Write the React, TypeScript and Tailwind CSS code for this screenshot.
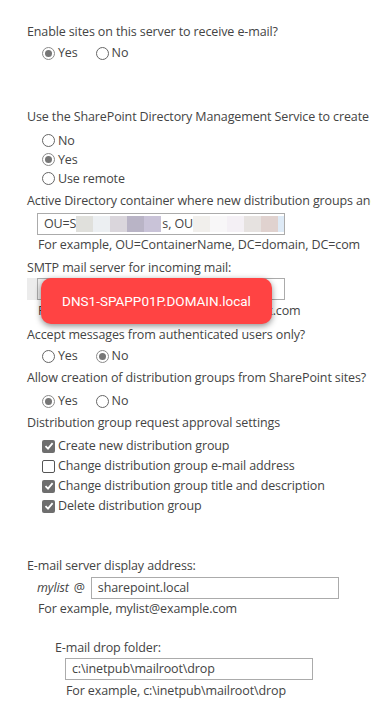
import React from 'react';

const font = { fontFamily: '"Open Sans", "Noto Sans", sans-serif' };

const Radio: React.FC<{ checked?: boolean; label: string }> = ({ checked, label }) => (
  <span className="flex items-center">
    <span className={`w-[13px] h-[13px] rounded-full border flex items-center justify-center bg-white ${checked ? 'border-[#8a8a8a]' : 'border-[#666]'}`}>
      {checked && <span className="w-[7px] h-[7px] rounded-full bg-[#767676]" />}
    </span>
    <span className="ml-[3px]">{label}</span>
  </span>
);

const Check: React.FC<{ checked?: boolean; label: string }> = ({ checked, label }) => (
  <div className="flex items-center h-5 pl-[42px]">
    {checked ? (
      <span className="w-[13px] h-[13px] rounded-[2px] bg-[#6e6e6e] flex items-center justify-center">
        <svg width="10" height="10" viewBox="0 0 10 10">
          <path d="M1.5 5.2 L4 7.6 L8.6 2.2" fill="none" stroke="#fff" strokeWidth="1.8" />
        </svg>
      </span>
    ) : (
      <span className="w-[13px] h-[13px] rounded-[2px] border border-[#555] bg-white" />
    )}
    <span className="ml-[3px]">{label}</span>
  </div>
);

const Blur: React.FC<{ colors: string[] }> = ({ colors }) => (
  <span className="flex h-[16px]">
    {colors.map((c, i) => (
      <span key={i} className="w-[17px] h-full" style={{ background: c }} />
    ))}
  </span>
);

export default function App() {
  return (
    <div className="relative w-[371px] h-[721px] overflow-hidden bg-white text-[#444] text-[12.5px] tracking-[-0.12px] leading-5 whitespace-nowrap" style={font}>
      <div className="flex flex-col pt-[22px]">
        <div className="h-5 pl-[27px]">Enable sites on this server to receive e-mail?</div>
        <div className="h-5 mt-[1px] pl-[42px] flex gap-[18px]">
          <Radio checked label="Yes" />
          <Radio label="No" />
        </div>

        <div className="h-5 mt-[44px] pl-[27px]">Use the SharePoint Directory Management Service to create distribution groups?</div>
        <div className="mt-[4px] pl-[42px] flex flex-col">
          <div className="h-[19px] flex items-center"><Radio label="No" /></div>
          <div className="h-[19px] flex items-center"><Radio checked label="Yes" /></div>
          <div className="h-[19px] flex items-center"><Radio label="Use remote" /></div>
        </div>

        <div className="h-5 mt-[3px] pl-[27px]">Active Directory container where new distribution groups and contacts will be created:</div>
        <div className="mt-[2px] ml-[37px] w-[248px] h-[22px] border border-[#ababab] flex items-center pl-[6px]">
          <span>OU=S</span>
          <Blur colors={['#e0e0dc', '#eceff2', '#dad6dc', '#b9b4c6', '#c9c3d8']} />
          <span className="ml-[1px]">s, OU</span>
          <Blur colors={['#f1efec', '#f8f7f8', '#f4f0f5', '#e6e2e0', '#e0d2cf']} />
          <span className="w-[6px] h-[16px] bg-[#deeaf6]" />
        </div>
        <div className="h-5 pl-[38px]">For example, OU=ContainerName, DC=domain, DC=com</div>

        <div className="h-5 mt-[3px] pl-[27px]">SMTP mail server for incoming mail:</div>
        <div className="flex items-center">
          <span className="ml-[27px] w-[34px] h-[22px] bg-[#ececec]" />
          <div className="ml-[-24px] w-[248px] h-[22px] border border-[#ababab]" />
        </div>
        <div className="h-5 mt-[1px] pl-[38px]">For example, smtp.mailserver.sharepoint.com</div>

        <div className="h-5 mt-[4px] pl-[27px]">Accept messages from authenticated users only?</div>
        <div className="h-5 mt-[1px] pl-[42px] flex gap-[18px]">
          <Radio label="Yes" />
          <Radio checked label="No" />
        </div>

        <div className="h-5 mt-[2px] pl-[27px]">Allow creation of distribution groups from SharePoint sites?</div>
        <div className="h-5 mt-[3px] pl-[42px] flex gap-[18px]">
          <Radio checked label="Yes" />
          <Radio label="No" />
        </div>

        <div className="h-5 mt-[2px] pl-[27px]">Distribution group request approval settings</div>
        <div className="mt-[3px] flex flex-col">
          <Check checked label="Create new distribution group" />
          <Check label="Change distribution group e-mail address" />
          <Check checked label="Change distribution group title and description" />
          <Check checked label="Delete distribution group" />
        </div>

        <div className="h-5 mt-[40px] pl-[27px]">E-mail server display address:</div>
        <div className="mt-[1px] pl-[37px] flex items-center">
          <span className="italic">mylist</span>
          <span className="ml-[5px]">@</span>
          <div className="ml-[6px] w-[248px] h-[22px] border border-[#ababab] flex items-center pl-[6px]">sharepoint.local</div>
        </div>
        <div className="h-5 pl-[38px]">For example, mylist@example.com</div>

        <div className="h-5 mt-[19px] pl-[55px]">E-mail drop folder:</div>
        <div className="ml-[65px] w-[248px] h-[22px] border border-[#ababab] flex items-center pl-[6px]">c:\inetpub\mailroot\drop</div>
        <div className="h-5 mt-[1px] pl-[66px]">For example, c:\inetpub\mailroot\drop</div>
      </div>

      <div
        className="absolute left-[41px] top-[278px] w-[231px] h-[46px] rounded-[10px] bg-[#ff4343] text-white text-[13.5px] tracking-normal flex items-center justify-center shadow-[0_2px_6px_rgba(0,0,0,0.45)]"
        style={{ fontFamily: 'Roboto, "Liberation Sans", sans-serif' }}
      >
        DNS1-SPAPP01P.DOMAIN.local
      </div>
    </div>
  );
}
